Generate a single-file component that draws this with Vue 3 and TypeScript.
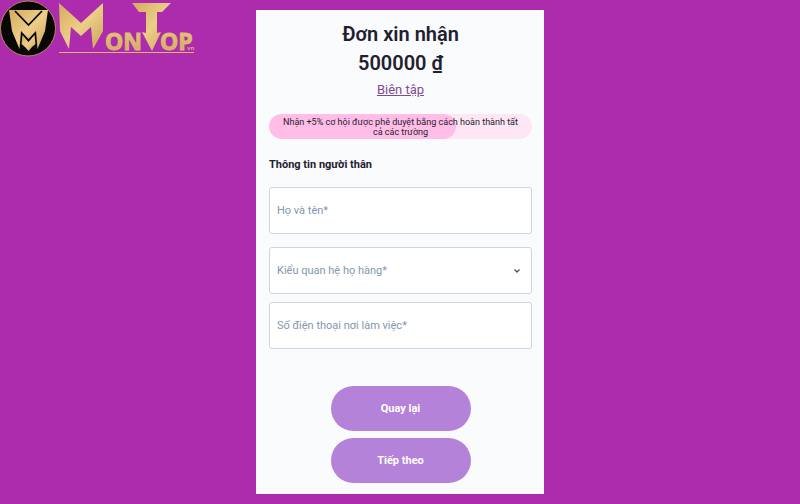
<script setup lang="ts">
import { ref } from 'vue'

interface Option {
  value: string
  label: string
}

const amount = 500000
const progress = 71
const fullName = ref('')
const relation = ref('')
const workPhone = ref('')

const relations: Option[] = [
  { value: 'parent', label: 'Cha mẹ' },
  { value: 'spouse', label: 'Vợ chồng' },
  { value: 'sibling', label: 'Anh chị em' },
]
</script>

<template>
  <div class="page">
    <header class="brand">
      <svg class="logo" viewBox="0 0 200 58" role="img" aria-label="MonTop.vn">
        <defs>
          <linearGradient id="gold" x1="0" y1="0" x2="1" y2="1">
            <stop offset="0" stop-color="#d5aa5e" />
            <stop offset="0.5" stop-color="#ecce88" />
            <stop offset="1" stop-color="#cfa258" />
          </linearGradient>
          <linearGradient id="goldText" x1="0" y1="0" x2="0" y2="1">
            <stop offset="0" stop-color="#ecd08c" />
            <stop offset="1" stop-color="#d0a057" />
          </linearGradient>
        </defs>
        <circle cx="28" cy="28.500" r="27.500" fill="#080706" stroke="#b98a5c" />
        <path d="M9 10 H48 L45 31 L37.500 49 L36 31 L28.500 39 L21 31 L19.500 49 L12 31 Z" fill="url(#gold)" />
        <path d="M15 11 L28.500 25 L42 11" fill="none" stroke="#080706" stroke-width="1.800" />
        <path d="M22.500 35 L28.500 42 L34.500 35 L35.500 44 L32 47 L28.500 51 L25 47 L21.500 44 Z" fill="url(#gold)" />
        <path d="M59 3 L81 23 L103 3 V31 L93 49 L91 27 L81 36 L71 27 L69 49 L60 31 Z" fill="url(#gold)" />
        <path d="M132 3 H171 L162 12 H157 V33 L161 32 L152 51 L142 32 L146 33 V12 H139 Z" fill="url(#gold)" />
        <text class="word" x="105" y="50" fill="url(#goldText)" stroke="#ddb76f">ON</text>
        <text class="word" x="160" y="50" fill="url(#goldText)" stroke="#ddb76f">OP<tspan class="suffix" x="187" y="50">vn</tspan></text>
        <path d="M59 52.500 H194" stroke="#dcb46b" />
      </svg>
    </header>

    <main class="card">
      <h1 class="title">Đơn xin nhận<br />{{ amount }} ₫</h1>
      <a class="edit" href="#">Biên tập</a>

      <div class="banner">
        <div class="banner-fill" :style="{ width: progress + '%' }"></div>
        <p class="banner-text">Nhận +5% cơ hội được phê duyệt bằng cách hoàn thành tất cả các trường</p>
      </div>

      <form @submit.prevent>
        <h2 class="section">Thông tin người thân</h2>
        <div class="fields">
          <input v-model="fullName" class="field spaced" type="text" placeholder="Họ và tên*" aria-label="Họ và tên" />
          <div class="select">
            <select v-model="relation" class="field" aria-label="Kiểu quan hệ họ hàng">
              <option value="" disabled>Kiểu quan hệ họ hàng*</option>
              <option v-for="r in relations" :key="r.value" :value="r.value">{{ r.label }}</option>
            </select>
            <svg class="chevron" viewBox="0 0 8 8" aria-hidden="true">
              <path d="M1.500 2.500 L4 5 L6.500 2.500" fill="none" stroke="#4d5257" stroke-width="1.300" />
            </svg>
          </div>
          <input v-model="workPhone" class="field" type="tel" placeholder="Số điện thoại nơi làm việc*" aria-label="Số điện thoại nơi làm việc" />
        </div>
        <div class="actions">
          <button class="button" type="button">Quay lại</button>
          <button class="button" type="submit">Tiếp theo</button>
        </div>
      </form>
    </main>
  </div>
</template>

<style>
body {
  background: #ad2bad;
}
</style>

<style scoped>
.page {
  display: grid;
  grid-template-columns: 1fr 36% 1fr;
  align-items: start;
  min-height: 100vh;
  box-sizing: border-box;
  font-family: Roboto, "Liberation Sans", sans-serif;
  color: #1f2130;
}

.brand {
  display: flex;
}

.logo {
  width: 200px;
  height: 58px;
}

.word {
  font: 700 23px "Open Sans", sans-serif;
  stroke-width: 1px;
}

.suffix {
  font: 700 6px "Open Sans", sans-serif;
  stroke: none;
}

.card {
  margin: 10px 0;
  padding: 10px 12px 11px 13px;
  background: #fafbfd;
  text-align: center;
}

.title {
  margin: 0;
  font-size: 20px;
  line-height: 29px;
  font-weight: 600;
}

.edit {
  display: block;
  margin-top: 3px;
  font-size: 13px;
  line-height: 18px;
  color: #7d4b94;
}

.banner {
  position: relative;
  margin-top: 15px;
  padding: 3px 11px 2px;
  border-radius: 13px;
  background: #fee6f4;
  overflow: hidden;
}

.banner-fill {
  position: absolute;
  inset: 0 auto 0 0;
  border-radius: 13px;
  background: #ffbde7;
}

.banner-text {
  position: relative;
  margin: 0;
  font-size: 9px;
  line-height: 10px;
}

.section {
  margin: 18px 0 14px;
  font-size: 11px;
  line-height: 16px;
  font-weight: 700;
  text-align: left;
}

.fields {
  display: flex;
  flex-direction: column;
  gap: 8px;
}

.field {
  display: block;
  width: 100%;
  height: 47px;
  box-sizing: border-box;
  padding: 0 7px;
  border: 1px solid #ccd6de;
  border-radius: 3px;
  background: #fff;
  color: #8497ac;
  font: 400 11px Roboto, "Liberation Sans", sans-serif;
  appearance: none;
}

.field::placeholder {
  color: #8497ac;
  opacity: 1;
}

.spaced {
  margin-bottom: 5px;
}

.select {
  position: relative;
}

.chevron {
  position: absolute;
  top: 20px;
  right: 11px;
  width: 8px;
  height: 8px;
  pointer-events: none;
}

.actions {
  display: flex;
  flex-direction: column;
  align-items: center;
  gap: 7px;
  margin-top: 37px;
}

.button {
  width: 140px;
  height: 45px;
  padding: 0;
  border: 0;
  border-radius: 23px;
  background: #b482d9;
  color: #fff;
  font: 700 11px Roboto, "Liberation Sans", sans-serif;
}
</style>
